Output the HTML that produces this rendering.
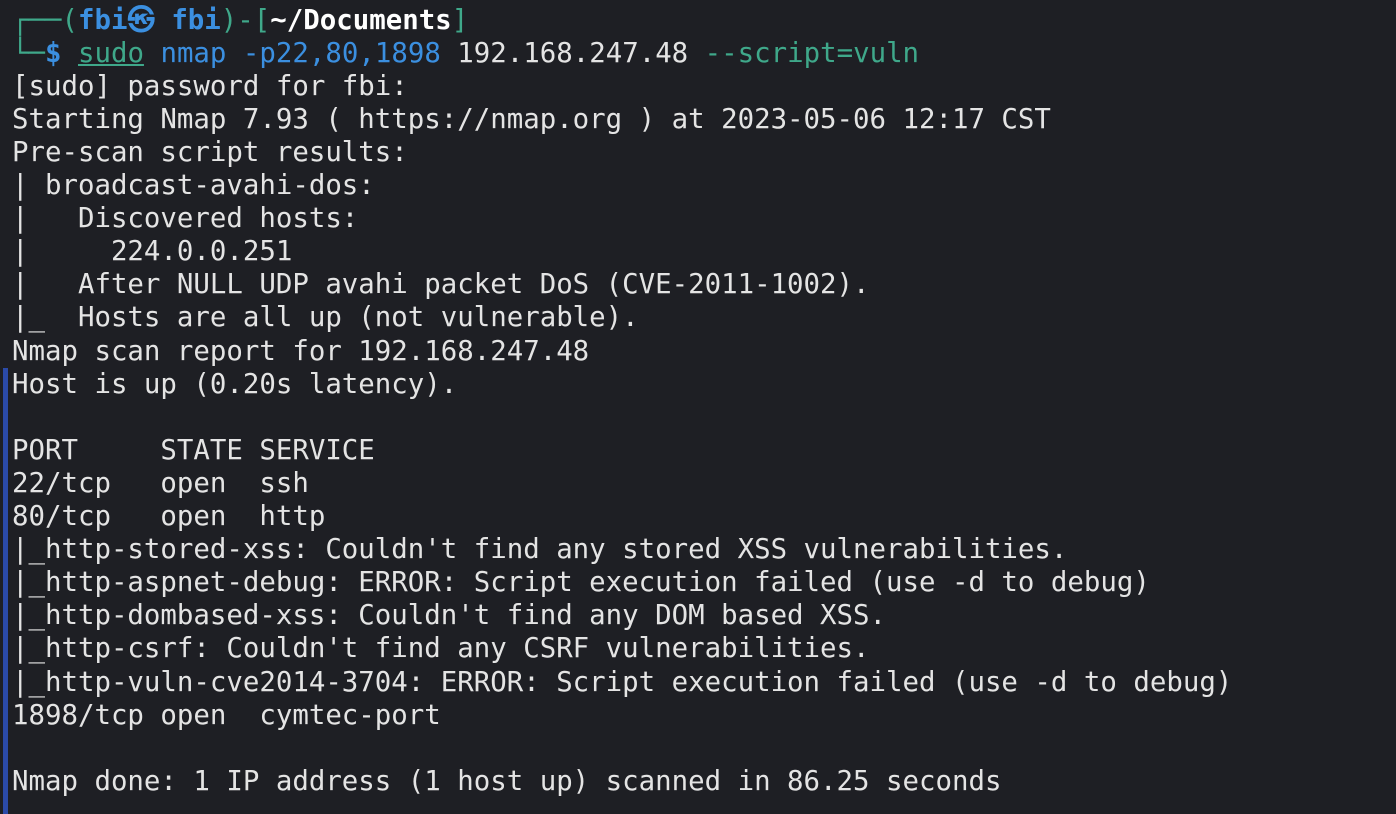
<!DOCTYPE html>
<html><head><meta charset="utf-8"><style>
html,body{margin:0;padding:0;width:1396px;height:814px;overflow:hidden;background:#1e1f24;}
.l{position:absolute;left:12px;white-space:pre;font-family:"DejaVu Sans Mono","Liberation Mono",monospace;font-size:27.4px;color:#e4e4e4;line-height:33px;}
.g{color:#3fa88a}.b{color:#3b8fe0}.w{color:#fff;font-weight:bold}
.bar{position:absolute;left:3px;top:368px;width:5px;height:446px;background:#2b4aa8;}
</style></head><body>
<div class="bar"></div>
<div class="l" style="top:4px"><span class="g">┌──(</span><span class="b" style="font-weight:bold">fbi㉿ fbi</span><span class="g">)-[</span><span class="w">~/Documents</span><span class="g">]</span></div>
<div class="l" style="top:37px"><span class="g">└─</span><span class="b" style="font-weight:bold">$</span> <span class="g" style="text-decoration:underline">sudo</span> <span class="b">nmap</span> <span class="b">-p22,80,1898</span> 192.168.247.48 <span class="g">--script=vuln</span></div>
<div class="l" style="top:70px">[sudo] password for fbi:</div>
<div class="l" style="top:103px">Starting Nmap 7.93 ( https://nmap.org ) at 2023-05-06 12:17 CST</div>
<div class="l" style="top:136px">Pre-scan script results:</div>
<div class="l" style="top:169px">| broadcast-avahi-dos:</div>
<div class="l" style="top:202px">|   Discovered hosts:</div>
<div class="l" style="top:235px">|     224.0.0.251</div>
<div class="l" style="top:268px">|   After NULL UDP avahi packet DoS (CVE-2011-1002).</div>
<div class="l" style="top:301px">|_  Hosts are all up (not vulnerable).</div>
<div class="l" style="top:335px">Nmap scan report for 192.168.247.48</div>
<div class="l" style="top:368px">Host is up (0.20s latency).</div>
<div class="l" style="top:434px">PORT     STATE SERVICE</div>
<div class="l" style="top:467px">22/tcp   open  ssh</div>
<div class="l" style="top:500px">80/tcp   open  http</div>
<div class="l" style="top:533px">|_http-stored-xss: Couldn't find any stored XSS vulnerabilities.</div>
<div class="l" style="top:566px">|_http-aspnet-debug: ERROR: Script execution failed (use -d to debug)</div>
<div class="l" style="top:599px">|_http-dombased-xss: Couldn't find any DOM based XSS.</div>
<div class="l" style="top:632px">|_http-csrf: Couldn't find any CSRF vulnerabilities.</div>
<div class="l" style="top:666px">|_http-vuln-cve2014-3704: ERROR: Script execution failed (use -d to debug)</div>
<div class="l" style="top:699px">1898/tcp open  cymtec-port</div>
<div class="l" style="top:765px">Nmap done: 1 IP address (1 host up) scanned in 86.25 seconds</div>
</body></html>
